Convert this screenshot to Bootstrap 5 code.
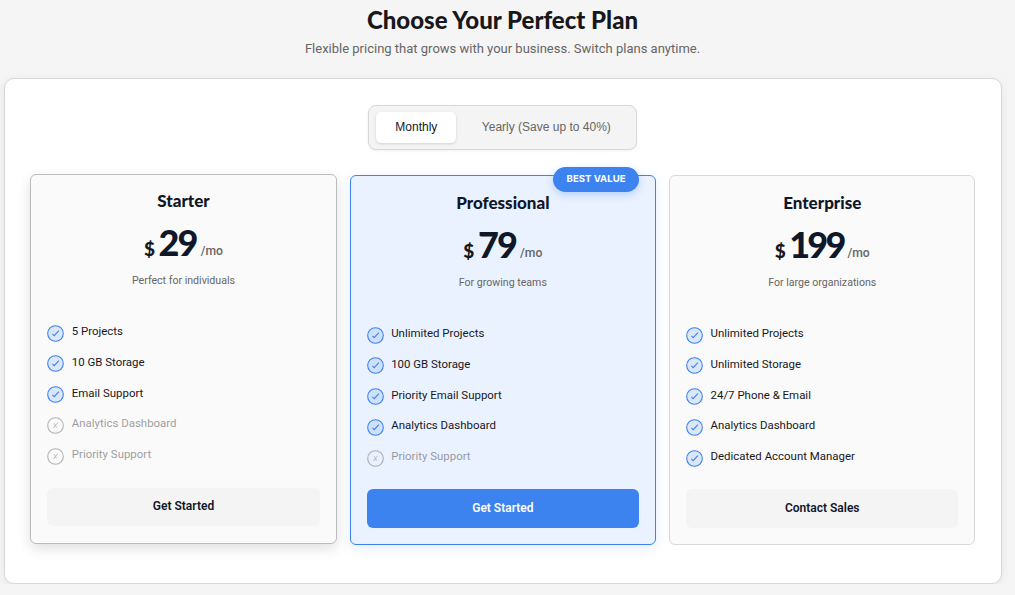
<!DOCTYPE html>
<html lang="en">
<head>
<meta charset="utf-8">
<meta name="viewport" content="width=device-width, initial-scale=1">
<title>Choose Your Perfect Plan</title>
<link href="https://cdn.jsdelivr.net/npm/bootstrap@5.3.0/dist/css/bootstrap.min.css" rel="stylesheet">
<style>
  body { background: #f5f5f5; color: #18181b; font-family: Roboto, "Liberation Sans", sans-serif; overflow: hidden; }
  .page-head { width: 1005px; }
  .page-title { font: 900 24px/30px Lato, sans-serif; padding-top: 5px; }
  .page-sub { font-size: 13px; line-height: 20px; color: #666; margin-top: 4px; }
  .panel { width: 998px; height: 506px; margin: 19px 0 0 4px; padding: 26px 25.6px 0 25.3px; background: #fff; border: 1px solid #d8d8d8; border-radius: 10px; box-shadow: 0 2px 8px rgba(0,0,0,.07); }
  .switcher { width: 269px; height: 45px; padding: 6px 7px; background: #f4f4f4; border: 1px solid #d8d8d8; border-radius: 8px; box-shadow: 0 1px 3px rgba(0,0,0,.06); font-family: "Liberation Sans", sans-serif; }
  .switcher .btn { font-size: 12px; line-height: 18px; color: #666; border: 0; border-radius: 5px; height: 31px; padding: 0 0 1px 7px; }
  .switcher .btn.active { width: 80px; padding-left: 0; background: #fff; color: #0f172a; box-shadow: 0 1px 3px rgba(0,0,0,.14); }
  .plans { gap: 13px; margin-top: 25px; }
  .plan { flex: 1 1 0; height: 370px; background: #fafafa; border: 1px solid #d8d8d8; border-radius: 6px; padding: 16px 16px 16px; }
  .plan.raised { margin-top: -1.5px; margin-bottom: 1.5px; border-color: #b9bcbc; box-shadow: 0 5px 13px rgba(0,0,0,.12); }
  .plan.featured { background: #ebf2ff; border-color: #3c83f0; box-shadow: 0 3px 12px rgba(60,131,240,.14); }
  .ribbon { right: 16px; top: -9px; width: 86px; height: 25px; border-radius: 13px; background: #3c83f0; color: #fff; font: 700 9.6px/24px Inter, sans-serif; box-shadow: 0 3px 9px rgba(60,131,240,.3); }
  .plan-name { font: 900 17px/22px Lato, sans-serif; color: #0f172a; margin: 0; }
  .raised .plan-name { margin-top: -.5px; }
  .price { height: 42px; margin-top: 9px; line-height: 42px; }
  .price .cur { font: 900 19px/42px Lato, sans-serif; margin-right: 3.5px; }
  .price .num { font: 900 36px/42px Lato, sans-serif; letter-spacing: -1.8px; color: #0f172a; }
  .price .num.wide { letter-spacing: -2.8px; }
  .price .per { position: relative; top: -1px; font-size: 12.2px; font-weight: 500; color: #666; margin-left: 4px; }
  .blurb { font-size: 10.6px; line-height: 16px; color: #666; margin: 10px 0 0; }
  .raised .blurb { margin-top: 9.5px; }
  .features { margin: 34px 0 0; }
  .raised .features { margin-top: 34.5px; }
  .features li { height: 30.75px; font-size: 11.45px; line-height: 17px; color: #18181b; gap: 7.5px; }
  .features li.off { opacity: .42; }
  .features svg { flex: none; width: 17px; height: 17px; margin-top: 1.6px; }
  .cta { height: 39px; border: 0; border-radius: 6px; background: #f4f4f4; color: #0f172a; font-size: 12px; font-weight: 600; line-height: 18px; padding: 0 0 2px; margin-top: 10.25px; }
  .raised .cta { height: 38px; margin-top: 11.25px; }
  .featured .cta { background: #3c83f0; color: #fff; }
</style>
</head>
<body>
<svg class="d-none" aria-hidden="true">
  <symbol id="yes" viewBox="0 0 17 17"><circle cx="8.5" cy="8.5" r="7.8" fill="#3c83f0" fill-opacity=".16" stroke="#3c83f0" stroke-width="1.1"/><path d="M5.4 8.8 7.2 10.7 11.9 5.6" fill="none" stroke="#3c83f0" stroke-width="1.1"/></symbol>
  <symbol id="no" viewBox="0 0 17 17"><circle cx="8.5" cy="8.5" r="7.8" fill="none" stroke="#555" stroke-width="1.1"/><path d="M10.7 6Q8.2 8 6.5 11M7.2 6.4Q8.7 8 9.4 10.6" fill="none" stroke="#555" stroke-width=".9"/></symbol>
</svg>
<header class="page-head text-center">
  <h1 class="page-title mb-0">Choose Your Perfect Plan</h1>
  <p class="page-sub mb-0">Flexible pricing that grows with your business. Switch plans anytime.</p>
</header>
<main class="panel">
  <div class="switcher d-flex mx-auto">
    <button class="btn active" type="button">Monthly</button>
    <button class="btn flex-grow-1" type="button">Yearly (Save up to 40%)</button>
  </div>
  <div class="plans d-flex">
    <section class="plan raised">
      <div class="text-center">
        <h2 class="plan-name">Starter</h2>
        <div class="price d-flex justify-content-center align-items-baseline"><span class="cur">$</span><span class="num">29</span><span class="per">/mo</span></div>
        <p class="blurb">Perfect for individuals</p>
      </div>
      <ul class="features list-unstyled">
        <li class="d-flex"><svg><use href="#yes"/></svg>5 Projects</li>
        <li class="d-flex"><svg><use href="#yes"/></svg>10 GB Storage</li>
        <li class="d-flex"><svg><use href="#yes"/></svg>Email Support</li>
        <li class="d-flex off"><svg><use href="#no"/></svg>Analytics Dashboard</li>
        <li class="d-flex off"><svg><use href="#no"/></svg>Priority Support</li>
      </ul>
      <button class="btn cta w-100" type="button">Get Started</button>
    </section>
    <section class="plan featured position-relative">
      <span class="ribbon position-absolute text-center">BEST VALUE</span>
      <div class="text-center">
        <h2 class="plan-name">Professional</h2>
        <div class="price d-flex justify-content-center align-items-baseline"><span class="cur">$</span><span class="num">79</span><span class="per">/mo</span></div>
        <p class="blurb">For growing teams</p>
      </div>
      <ul class="features list-unstyled">
        <li class="d-flex"><svg><use href="#yes"/></svg>Unlimited Projects</li>
        <li class="d-flex"><svg><use href="#yes"/></svg>100 GB Storage</li>
        <li class="d-flex"><svg><use href="#yes"/></svg>Priority Email Support</li>
        <li class="d-flex"><svg><use href="#yes"/></svg>Analytics Dashboard</li>
        <li class="d-flex off"><svg><use href="#no"/></svg>Priority Support</li>
      </ul>
      <button class="btn cta w-100" type="button">Get Started</button>
    </section>
    <section class="plan">
      <div class="text-center">
        <h2 class="plan-name">Enterprise</h2>
        <div class="price d-flex justify-content-center align-items-baseline"><span class="cur">$</span><span class="num wide">199</span><span class="per">/mo</span></div>
        <p class="blurb">For large organizations</p>
      </div>
      <ul class="features list-unstyled">
        <li class="d-flex"><svg><use href="#yes"/></svg>Unlimited Projects</li>
        <li class="d-flex"><svg><use href="#yes"/></svg>Unlimited Storage</li>
        <li class="d-flex"><svg><use href="#yes"/></svg>24/7 Phone &amp; Email</li>
        <li class="d-flex"><svg><use href="#yes"/></svg>Analytics Dashboard</li>
        <li class="d-flex"><svg><use href="#yes"/></svg>Dedicated Account Manager</li>
      </ul>
      <button class="btn cta w-100" type="button">Contact Sales</button>
    </section>
  </div>
</main>
<script src="https://cdn.jsdelivr.net/npm/bootstrap@5.3.0/dist/js/bootstrap.bundle.min.js"></script>
</body>
</html>
